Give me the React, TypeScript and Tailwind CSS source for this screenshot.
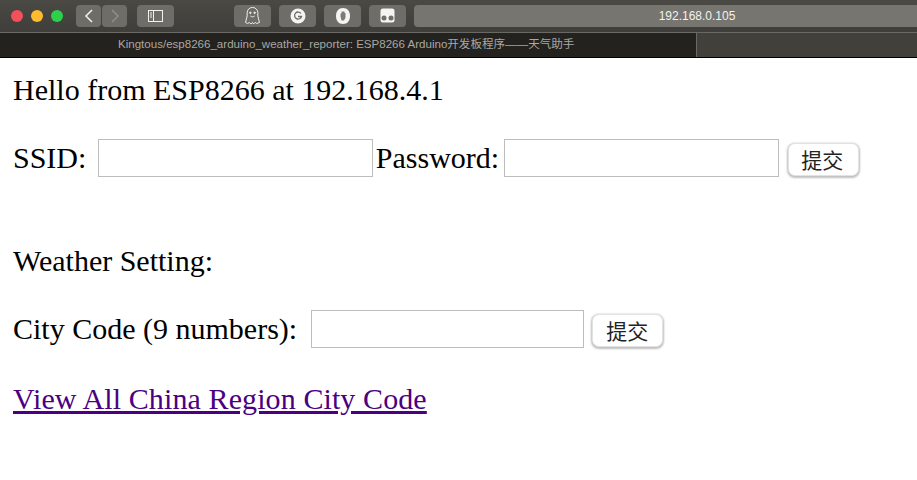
function ToolBtn({ className = "", children }: { className?: string; children?: React.ReactNode }) {
  return <div className={`h-[22px] shrink-0 rounded-[4px] bg-[#6e6d68] flex items-center justify-center ${className}`}>{children}</div>;
}

function SubmitBtn({ className = "" }: { className?: string }) {
  return (
    <button className={`w-[71px] h-[33px] rounded-[7px] bg-white border border-[#e2e2e2] shadow-[0_1px_2px_1px_rgba(0,0,0,0.25)] text-[21px] leading-none text-[#222] font-['Noto_Sans_CJK_SC',sans-serif] ${className}`}>
      提交
    </button>
  );
}

function Field({ className = "" }: { className?: string }) {
  return <input className={`h-[38px] shrink-0 bg-white border border-[#bdbdbd] outline-none ${className}`} />;
}

export default function App() {
  return (
    <div className="w-[917px] h-[480px] overflow-hidden bg-white flex flex-col">
      <div className="h-[33px] shrink-0 flex items-center pl-[11px] pr-0 pb-[1px] bg-gradient-to-b from-[#4a4944] to-[#3f3e3a] border-b border-[#6a6965]">
        <div className="flex gap-[8px] shrink-0">
          <div className="w-[12px] h-[12px] rounded-full bg-[#f4505a]" />
          <div className="w-[12px] h-[12px] rounded-full bg-[#fdbc2e]" />
          <div className="w-[12px] h-[12px] rounded-full bg-[#2dd04a]" />
        </div>
        <div className="flex gap-[1px] ml-[13px] shrink-0">
          <ToolBtn className="w-[25px]">
            <svg width="10" height="14" viewBox="0 0 10 14" fill="none" stroke="#f2f2f0" strokeWidth="1.5"><path d="M8 1L2 7l6 6" /></svg>
          </ToolBtn>
          <ToolBtn className="w-[25px]">
            <svg width="10" height="14" viewBox="0 0 10 14" fill="none" stroke="#8f8e8a" strokeWidth="1.5"><path d="M2 1l6 6-6 6" /></svg>
          </ToolBtn>
        </div>
        <ToolBtn className="w-[37px] ml-[10px]">
          <svg width="15" height="12" viewBox="0 0 15 12" fill="none" stroke="#f2f2f0" strokeWidth="1"><rect x="0.5" y="0.5" width="14" height="11" /><path d="M5.5 0.5v11M2 3h2M2 5h2M2 7h2" /></svg>
        </ToolBtn>
        <ToolBtn className="w-[37px] ml-[60px]">
          <svg width="15" height="20" viewBox="0 0 14 18" fill="none" stroke="#f2f2f0" strokeWidth="0.9"><path d="M2 9V6a5 5 0 0 1 10 0v3l1.500 6-2.500 1-1.500-1-1.500 1.500L7 15l-1.500 1.500L4 15l-1.500 1-2-1z" /><circle cx="5" cy="6" r=".7" fill="#f2f2f0" /><circle cx="9" cy="6" r=".7" fill="#f2f2f0" /><path d="M5 9c1 1 3 1 4 0" /></svg>
        </ToolBtn>
        <ToolBtn className="w-[37px] ml-[8px]">
          <svg width="16" height="16" viewBox="0 0 16 16"><circle cx="8" cy="8" r="7.500" fill="#f4f4f2" /><path d="M11 5.500A3.500 3.500 0 1 0 11.500 8.500H8" fill="none" stroke="#6e6d68" strokeWidth="1.300" /></svg>
        </ToolBtn>
        <ToolBtn className="w-[37px] ml-[8px]">
          <svg width="16" height="18" viewBox="0 0 16 18"><path d="M8 1c4.500 0 7 3.500 7 8s-2.500 8-7 8-7-3.500-7-8 2.500-8 7-8z" fill="#f4f4f2" /><path d="M5.500 9.500V6.500h1V4.500h3V6h1v4.500l-1.500 3h-2.500z" fill="#7b7a75" /></svg>
        </ToolBtn>
        <ToolBtn className="w-[37px] ml-[8px]">
          <svg width="15" height="15" viewBox="0 0 15 15"><rect x=".5" y=".5" width="14" height="14" rx="2.500" fill="#f4f4f2" /><circle cx="4" cy="10" r="2.500" fill="#6e6d68" /><circle cx="11" cy="10" r="2.500" fill="#6e6d68" /></svg>
        </ToolBtn>
        <div className="ml-[8px] w-[566px] shrink-0 h-[22px] rounded-l-[4px] bg-[#76756f] flex items-center justify-center text-[12px] font-medium text-[#f2f2f0] font-['Liberation_Sans',sans-serif]">
          192.168.0.105
        </div>
      </div>
      <div className="h-[25px] shrink-0 flex bg-[#23221e] border-b border-black">
        <div className="w-[696px] shrink-0 pl-[118px] pt-[3px] text-[11.560px] leading-[16px] text-[#a9a8a4] font-['Liberation_Sans','Noto_Sans_CJK_SC',sans-serif] whitespace-nowrap">
          Kingtous/esp8266_arduino_weather_reporter: ESP8266 Arduino开发板程序——天气助手
        </div>
        <div className="flex-1 bg-[#41403b] border-l border-[#6a6965]" />
      </div>

      <div className="pl-[13px] text-black text-[30px] leading-[34px] font-['Liberation_Serif',serif]">
        <p className="mt-[15px]">Hello from ESP8266 at 192.168.4.1</p>
        <div className="mt-[32px] flex items-center h-[38px] whitespace-pre">
          <span>SSID: </span>
          <Field className="w-[275px] ml-[4px]" />
          <span className="ml-[3px]">Password:</span>
          <Field className="w-[275px] ml-[5px]" />
          <div className="ml-[9px]"><SubmitBtn className="pr-[3px]" /></div>
        </div>
        <p className="mt-[67px]">Weather Setting:</p>
        <div className="mt-[32px] flex items-center h-[38px] whitespace-pre">
          <span>City Code (9 numbers): </span>
          <Field className="w-[273px] ml-[6px]" />
          <div className="ml-[8px]"><SubmitBtn /></div>
        </div>
        <p className="mt-[34px] tracking-[0.1px]"><a href="#" className="text-[#4b0082] underline">View All China Region City Code</a></p>
      </div>
    </div>
  );
}
